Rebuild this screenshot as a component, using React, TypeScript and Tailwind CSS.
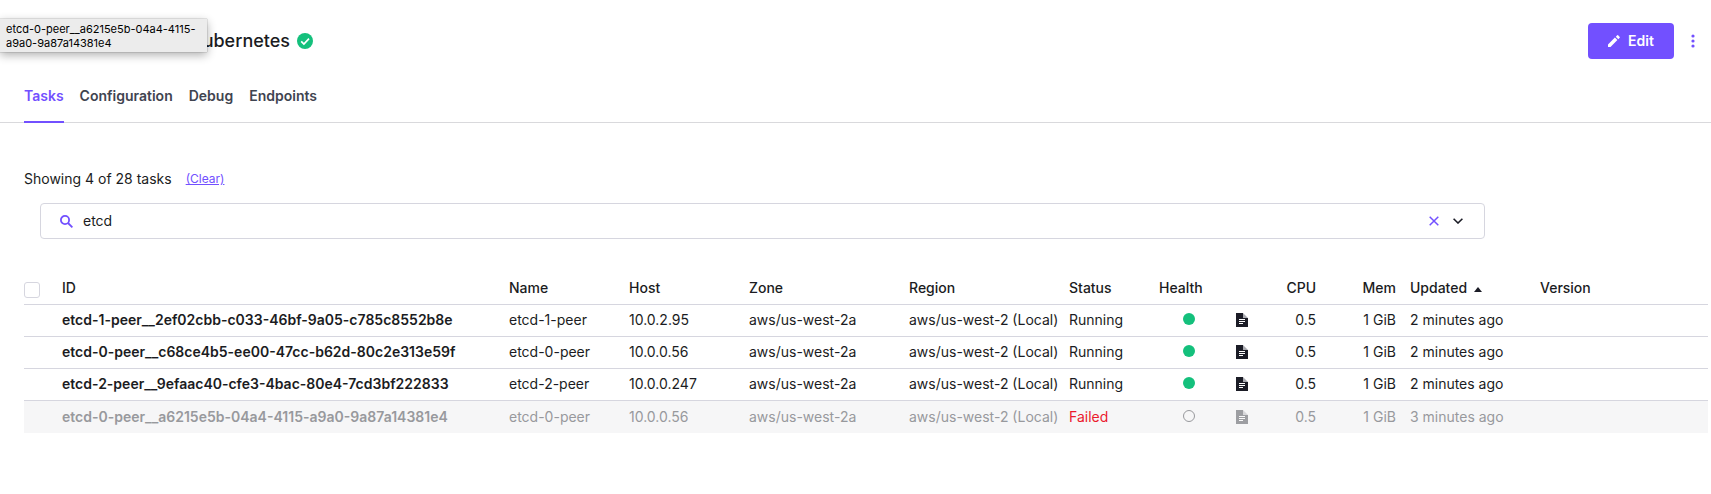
import React from "react";

type Task = {
  id: string;
  name: string;
  host: string;
  status: "Running" | "Failed";
  updated: string;
};

const tasks: Task[] = [
  { id: "etcd-1-peer__2ef02cbb-c033-46bf-9a05-c785c8552b8e", name: "etcd-1-peer", host: "10.0.2.95", status: "Running", updated: "2 minutes ago" },
  { id: "etcd-0-peer__c68ce4b5-ee00-47cc-b62d-80c2e313e59f", name: "etcd-0-peer", host: "10.0.0.56", status: "Running", updated: "2 minutes ago" },
  { id: "etcd-2-peer__9efaac40-cfe3-4bac-80e4-7cd3bf222833", name: "etcd-2-peer", host: "10.0.0.247", status: "Running", updated: "2 minutes ago" },
  { id: "etcd-0-peer__a6215e5b-04a4-4115-a9a0-9a87a14381e4", name: "etcd-0-peer", host: "10.0.0.56", status: "Failed", updated: "3 minutes ago" },
];

const columns =
  "grid grid-cols-[38px_447px_120px_120px_160px_160px_90px_77px_28px_52px_80px_14px_130px_1fr] whitespace-nowrap";

function CheckCircle() {
  return (
    <svg className="block h-4 w-4" viewBox="0 0 16 16">
      <circle cx="8" cy="8" r="8" fill="#14c07c" />
      <path d="M4.2 8.3 6.9 11 12 5.7" fill="none" stroke="#fff" strokeWidth="1.7" />
    </svg>
  );
}

function Pencil() {
  return (
    <svg className="block h-3 w-3" viewBox="0 0 12 12" fill="#fff">
      <path d="M0 9.5V12h2.5L9.4 5.1 6.9 2.6zM11.7 2.8a.7.7 0 0 0 0-.9L10.1.3a.7.7 0 0 0-.9 0L7.8 1.7l2.5 2.5z" />
    </svg>
  );
}

function Document() {
  return (
    <svg className="block h-3.5 w-3" viewBox="0 0 12 14">
      <path d="M0 0h7v5h5v9H0z" fill="#1b1c26" />
      <path d="M7 0l5 5H7z" fill="#a9aab0" />
      <path d="M3 6.5h6M3 8.5h6M3 10.5h4" stroke="#fff" strokeWidth="1" />
    </svg>
  );
}

function Tab({ label, active = false }: { label: string; active?: boolean }) {
  return (
    <div
      className={
        active
          ? "flex h-[51px] items-start border-b-2 border-[#7250ff] text-[#7250ff]"
          : "flex h-[51px] items-start text-[#3f4450]"
      }
    >
      <span className="whitespace-nowrap leading-[50px] h-[49px] block -mt-px">{label}</span>
    </div>
  );
}

function TaskRow({ task }: { task: Task }) {
  const failed = task.status === "Failed";
  return (
    <div
      className={`${columns} h-8 items-center pb-px ${
        failed ? "bg-[#f6f6f7] text-[#98999d]" : "border-b border-[#d6d6df]"
      }`}
    >
      <span />
      <span className="font-semibold">{task.id}</span>
      <span>{task.name}</span>
      <span>{task.host}</span>
      <span>aws/us-west-2a</span>
      <span>aws/us-west-2 (Local)</span>
      <span className={failed ? "text-[#eb1a2e]" : ""}>{task.status}</span>
      <span className="pl-6">
        <span
          className={
            failed
              ? "mb-0.5 block h-3 w-3 rounded-full border border-[#98999d]"
              : "mb-0.5 block h-3 w-3 rounded-full bg-[#14c07c]"
          }
        />
      </span>
      <span className={failed ? "opacity-40" : ""}>
        <Document />
      </span>
      <span className="text-right">0.5</span>
      <span className="text-right">1 GiB</span>
      <span />
      <span>{task.updated}</span>
      <span />
    </div>
  );
}

export default function App() {
  return (
    <div className="relative h-[494px] w-[1711px] overflow-hidden bg-white font-['Inter',sans-serif] text-[14px] leading-5 text-[#1b1c22]">
      <header className="h-[123px] border-b border-[#d9d9dc]">
        <div className="flex h-[72px] items-center justify-between pt-[10px] pr-[16px] pl-[24px]">
          <div className="flex w-[289px] items-center justify-end gap-[7px]">
            <h1 className="text-[18px] font-medium">kubernetes</h1>
            <CheckCircle />
          </div>
          <div className="flex items-center gap-[17px]">
            <button className="flex h-9 w-[86px] items-center justify-center gap-2 rounded-[4px] bg-[#7250ff] font-semibold text-white">
              <Pencil />
              <span>Edit</span>
            </button>
            <svg className="block h-[14px] w-[4px]" viewBox="0 0 4 14" fill="#7250ff">
              <circle cx="2" cy="2" r="1.6" />
              <circle cx="2" cy="7" r="1.6" />
              <circle cx="2" cy="12" r="1.6" />
            </svg>
          </div>
        </div>
        <nav className="flex gap-4 pl-6 font-semibold">
          <Tab label="Tasks" active />
          <Tab label="Configuration" />
          <Tab label="Debug" />
          <Tab label="Endpoints" />
        </nav>
      </header>

      <main className="pl-6 pr-[3px]">
        <div className="flex h-20 items-center gap-[14px] pt-[35px] pb-[3px]">
          <span>Showing 4 of 28 tasks</span>
          <a className="text-[12px] text-[#7250ff] underline">(Clear)</a>
        </div>

        <div className="ml-4 flex h-9 w-[1445px] items-center rounded-[4px] border border-[#d6d6df] pr-[21px] pl-[19px]">
          <svg className="block h-[13px] w-[13px]" viewBox="0 0 13 13" fill="none" stroke="#7250ff" strokeWidth="1.8">
            <circle cx="5" cy="5" r="4.1" />
            <path d="M8 8l4.4 4.4" />
          </svg>
          <span className="ml-[10px] flex-1">etcd</span>
          <svg className="block h-[10px] w-[10px]" viewBox="0 0 10 10" fill="none" stroke="#7250ff" strokeWidth="1.5">
            <path d="M.7.7l8.6 8.6M9.3.7L.7 9.3" />
          </svg>
          <svg className="ml-[14px] block h-[6px] w-[10px]" viewBox="0 0 10 6" fill="none" stroke="#1b1c26" strokeWidth="1.6">
            <path d="M.6.7L5 5 9.4.7" />
          </svg>
        </div>

        <div className="mt-[33px]">
          <div className={`${columns} h-[33px] items-center border-b border-[#d6d6df] font-medium`}>
            <span className="mt-1 block h-4 w-4 rounded-[3px] border border-[#d6d6df]" />
            <span>ID</span>
            <span>Name</span>
            <span>Host</span>
            <span>Zone</span>
            <span>Region</span>
            <span>Status</span>
            <span>Health</span>
            <span />
            <span className="text-right">CPU</span>
            <span className="text-right">Mem</span>
            <span />
            <span className="flex items-center gap-[7px]">
              Updated
              <svg className="mt-[3px] block h-[5px] w-2" viewBox="0 0 8 5" fill="#1b1c26">
                <path d="M4 0l4 5H0z" />
              </svg>
            </span>
            <span>Version</span>
          </div>
          {tasks.map((task) => (
            <TaskRow key={task.id} task={task} />
          ))}
        </div>
      </main>

      <div className="absolute top-[19px] left-0 h-[33px] w-[207px] bg-[#ececec] pt-[3px] pl-[6px] text-[11px] leading-[14px] text-black shadow-[0_3px_9px_rgba(0,0,0,0.32),0_0_1px_rgba(0,0,0,0.5)]">
        etcd-0-peer__a6215e5b-04a4-4115-
        <br />
        a9a0-9a87a14381e4
      </div>
    </div>
  );
}
